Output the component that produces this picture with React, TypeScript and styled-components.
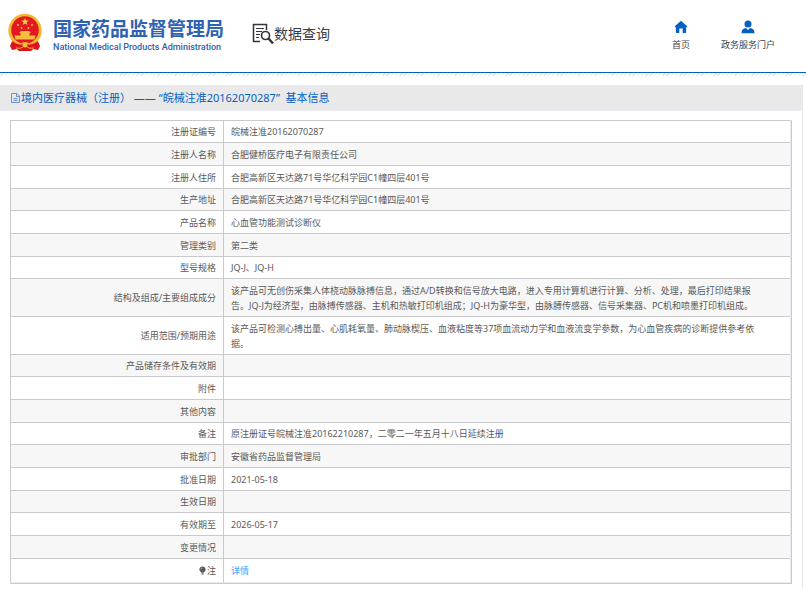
import React from "react";
import styled, { createGlobalStyle } from "styled-components";

const GlobalStyle = createGlobalStyle`
  *, *::before, *::after { box-sizing: border-box; }
  body {
    margin: 0;
    background: #fff;
    color: #595959;
    font-family: "Noto Sans", "Noto Sans CJK SC", sans-serif;
    font-size: 9px;
    line-height: 15px;
  }
  a { text-decoration: none; }
`;

const Header = styled.header`
  display: flex;
  align-items: flex-start;
  justify-content: space-between;
  height: 73px;
  padding: 13px 31px 0 7px;
  border-bottom: 1px solid #0560c2;
`;

const Brand = styled.div`
  display: flex;
  align-items: flex-start;
`;

const HomeLink = styled.a`
  display: flex;
  gap: 10px;
  color: #2f62b0;
`;

const BrandText = styled.div`
  display: flex;
  flex-direction: column;
  padding-top: 3px;
`;

const BrandName = styled.strong`
  font-family: "Noto Sans CJK SC", sans-serif;
  font-size: 19px;
  line-height: 24px;
  font-weight: 700;
  white-space: nowrap;
`;

const BrandSub = styled.span`
  font-family: Roboto, sans-serif;
  font-size: 9px;
  line-height: 14px;
  font-weight: 500;
  white-space: nowrap;
`;

const Section = styled.div`
  display: flex;
  align-items: center;
  margin: 10px 0 0 28px;
  color: #3c3c46;
  font-size: 14px;
  line-height: 22px;
  white-space: nowrap;
`;

const Nav = styled.nav`
  display: flex;
  gap: 31px;
  padding-top: 7px;
`;

const NavLink = styled.a`
  display: flex;
  flex-direction: column;
  align-items: center;
  gap: 3px;
  color: #444;
`;

const Hatch = styled.div`
  height: 3px;
  background: repeating-linear-gradient(135deg, #fff 0 2px, #e6e6e6 2px 3px);
`;

const Main = styled.main`
  margin: 9px 3px 0 0;
`;

const TitleBar = styled.h1`
  display: flex;
  align-items: center;
  height: 26px;
  margin: 0;
  padding-left: 11px;
  background: #e9e9e9;
  border-bottom: 1px solid #ebebf3;
  color: #0560c2;
  font-size: 11px;
  font-weight: 400;
  line-height: 24px;
  white-space: pre;
`;

const Panel = styled.section`
  padding: 9px 10px 6px 10px;
  border-right: 1px solid #e6e6ea;
`;

const Frame = styled.div`
  border: solid #c9c9ce;
  border-width: 0 1px 1px 0;
  padding: 0 1px 1px 0;
  background: #ebebf3;
`;

const Table = styled.table`
  width: 100%;
  table-layout: fixed;
  border-spacing: 0;
  background: #fff;
`;

const Row = styled.tr`
  height: 23px;
  &:nth-child(3n + 1) { height: 22px; }
  &:nth-child(even) { background: #f7f7f7; }
  &:last-child { height: 24px; }
`;

const Label = styled.th`
  width: 214px;
  padding: 0 7px;
  border: solid #cacacc;
  border-width: 1px 1px 0 1px;
  text-align: right;
  font-weight: 400;
`;

const Value = styled.td<{ $long?: boolean }>`
  padding: ${(p) => (p.$long ? "4px 32px 3px 7px" : "0 7px")};
  border-top: 1px solid #cacacc;
`;

const NoteLabel = styled.span`
  display: inline-flex;
  align-items: center;
  gap: 1px;
`;

const DetailLink = styled.a`
  color: #409eff;
`;

const Emblem = () => (
  <svg width="36" height="39" viewBox="0 0 36 39" aria-hidden="true">
    <path d="M6 26 3 33l2 4 5-1 2 2h12l2-2 5 1 2-4-3-7z" fill="#d9161b" />
    <circle cx="18" cy="17.5" r="16.7" fill="#f3bd35" />
    <circle cx="18" cy="17.5" r="15.6" fill="none" stroke="#eeb02e" strokeWidth="1" strokeDasharray="2 1" />
    <circle cx="18" cy="17" r="13.8" fill="#e21920" />
    <path d="m18 5 1 2.6h2.700l-2.200 1.700.9 2.700-2.400-1.600-2.400 1.600.9-2.700-2.200-1.700H17z" fill="#f8d24a" />
    <g fill="#f4bd3e">
      <circle cx="11" cy="12" r="1" /><circle cx="25" cy="12" r="1" />
      <circle cx="14.500" cy="15" r="1" /><circle cx="21.500" cy="15" r="1" />
      <path d="M12 20 14 18h8l2 2zM13.500 20h9v2.500h-9zM7.500 22.500h21l-1 4h-19z" />
    </g>
    <path d="M6 28.500q12 5 24 0l1 5-6 3H11l-6-3z" fill="#d9161b" />
    <path d="M6 28q6 4 9 2.500 3-1.500 6 0 3 1.500 9-2.500" fill="none" stroke="#f5a83a" strokeWidth="1.500" />
    <circle cx="18" cy="32" r="2.500" fill="#f3bd35" />
    <path d="M9 35q5 1 7-1m4 0q2 2 7 1" fill="none" stroke="#f5a83a" />
  </svg>
);

const SearchDocIcon = () => (
  <svg width="22" height="22" viewBox="0 0 22 22" fill="none" stroke="#34343f" aria-hidden="true">
    <path d="M8 18.500H1.500V1.500h13V7" strokeWidth="1.500" />
    <path d="M4 5.500h8M4 8.500h6M4 11.500h4M4 14.500h3" strokeWidth="1.200" />
    <circle cx="13.500" cy="12.500" r="4" strokeWidth="1.700" />
    <path d="m16.500 15.500 4.500 5" strokeWidth="2.500" />
  </svg>
);

const HomeIcon = () => (
  <svg width="14" height="14" viewBox="0 0 14 14" fill="#0560c2" aria-hidden="true">
    <path d="M7 .8.800 6.300q-.3.700.4.900h.7v5.100q0 .7.700.7h2.700V8.500h3.400V13h2.700q.7 0 .7-.7V7.200h.7q.7-.2.400-.9z" />
  </svg>
);

const UserIcon = () => (
  <svg width="14" height="14" viewBox="0 0 14 14" fill="#0560c2" aria-hidden="true">
    <circle cx="7" cy="4" r="3.500" />
    <path d="M.5 13.200q0-4.700 4.500-5.200l2 2 2-2q4.500.5 4.500 5.200z" />
  </svg>
);

const FileIcon = () => (
  <svg width="10" height="10" viewBox="0 0 10 10" fill="none" stroke="#6c8fd0" aria-hidden="true">
    <path d="M.5.5h5.500l2.500 2.500v6.500h-8zM5.500.5v3h3M2.500 5.500h4M2.500 7.500h4" />
  </svg>
);

const BulbIcon = () => (
  <svg width="7" height="9" viewBox="0 0 7 9" aria-hidden="true">
    <path d="M3.500.5a3 3 0 0 0-1.700 5.500l.7.800h2l.7-.8A3 3 0 0 0 3.500.5zM2.500 7.300h2V8.500h-2z" fill="#595959" />
    <path d="M2 3.500Q2 2 3.500 2" fill="none" stroke="#ccc" strokeWidth=".7" />
  </svg>
);

type Entry = { label: React.ReactNode; value?: React.ReactNode; long?: boolean };

const entries: Entry[] = [
  { label: "注册证编号", value: "皖械注准20162070287" },
  { label: "注册人名称", value: "合肥健桥医疗电子有限责任公司" },
  { label: "注册人住所", value: "合肥高新区天达路71号华亿科学园C1幢四层401号" },
  { label: "生产地址", value: "合肥高新区天达路71号华亿科学园C1幢四层401号" },
  { label: "产品名称", value: "心血管功能测试诊断仪" },
  { label: "管理类别", value: "第二类" },
  { label: "型号规格", value: "JQ-J、JQ-H" },
  {
    label: "结构及组成/主要组成成分",
    long: true,
    value:
      "该产品可无创伤采集人体桡动脉脉搏信息，通过A/D转换和信号放大电路，进入专用计算机进行计算、分析、处理，最后打印结果报告。JQ-J为经济型，由脉搏传感器、主机和热敏打印机组成；JQ-H为豪华型，由脉膊传感器、信号采集器、PC机和喷墨打印机组成。",
  },
  {
    label: "适用范围/预期用途",
    long: true,
    value:
      "该产品可检测心搏出量、心肌耗氧量、肺动脉楔压、血液粘度等37项血流动力学和血液流变学参数，为心血管疾病的诊断提供参考依据。",
  },
  { label: "产品储存条件及有效期" },
  { label: "附件" },
  { label: "其他内容" },
  { label: "备注", value: "原注册证号皖械注准20162210287，二零二一年五月十八日延续注册" },
  { label: "审批部门", value: "安徽省药品监督管理局" },
  { label: "批准日期", value: "2021-05-18" },
  { label: "生效日期" },
  { label: "有效期至", value: "2026-05-17" },
  { label: "变更情况" },
  { label: <NoteLabel><BulbIcon />注</NoteLabel>, value: <DetailLink href="#detail">详情</DetailLink> },
];

export default function App() {
  return (
    <>
      <GlobalStyle />
      <Header>
        <Brand>
          <HomeLink href="#">
            <Emblem />
            <BrandText>
              <BrandName>国家药品监督管理局</BrandName>
              <BrandSub>National Medical Products Administration</BrandSub>
            </BrandText>
          </HomeLink>
          <Section>
            <SearchDocIcon />
            数据查询
          </Section>
        </Brand>
        <Nav>
          <NavLink href="#home"><HomeIcon />首页</NavLink>
          <NavLink href="#portal"><UserIcon />政务服务门户</NavLink>
        </Nav>
      </Header>
      <Hatch />
      <Main>
        <TitleBar>
          <FileIcon />
          境内医疗器械（注册） —— “皖械注准20162070287”  基本信息
        </TitleBar>
        <Panel>
          <Frame>
            <Table>
              <tbody>
                {entries.map((entry, index) => (
                  <Row key={index}>
                    <Label scope="row">{entry.label}</Label>
                    <Value $long={entry.long}>{entry.value}</Value>
                  </Row>
                ))}
              </tbody>
            </Table>
          </Frame>
        </Panel>
      </Main>
    </>
  );
}
